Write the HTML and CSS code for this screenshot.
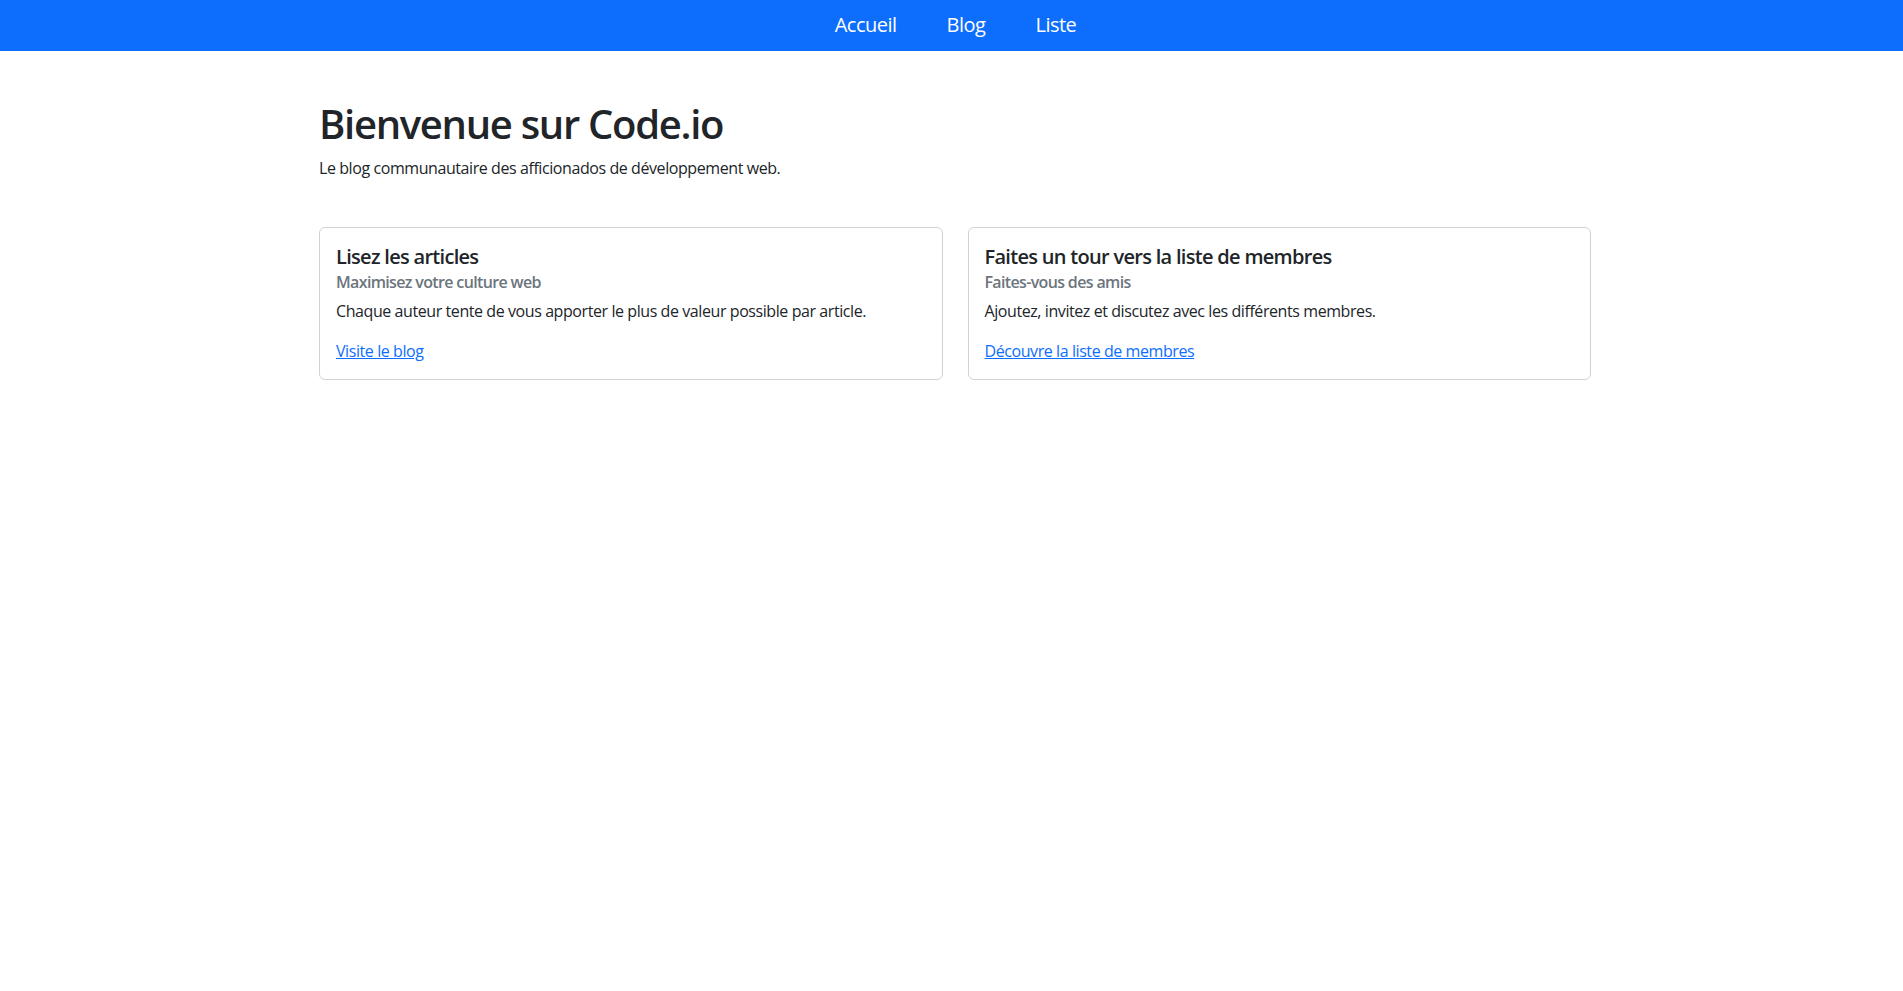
FILE: index.html
```html
<!DOCTYPE html>
<html lang="fr">
<head>
<meta charset="utf-8">
<title>Code.io</title>
<link rel="stylesheet" href="styles.css">
</head>
<body>
<nav class="navbar">
  <a class="nav-link" href="#">Accueil</a>
  <a class="nav-link" href="#">Blog</a>
  <a class="nav-link" href="#">Liste</a>
</nav>
<main class="container">
  <h1 class="title">Bienvenue sur Code.io</h1>
  <p class="lead">Le blog communautaire des afficionados de développement web.</p>
  <div class="cards">
    <div class="card">
      <h5 class="card-title">Lisez les articles</h5>
      <h6 class="card-subtitle">Maximisez votre culture web</h6>
      <p class="card-text">Chaque auteur tente de vous apporter le plus de valeur possible par article.</p>
      <a class="card-link" href="#">Visite le blog</a>
    </div>
    <div class="card">
      <h5 class="card-title">Faites un tour vers la liste de membres</h5>
      <h6 class="card-subtitle">Faites-vous des amis</h6>
      <p class="card-text">Ajoutez, invitez et discutez avec les différents membres.</p>
      <a class="card-link" href="#">Découvre la liste de membres</a>
    </div>
  </div>
</main>
</body>
</html>
```
FILE: styles.css
```css
* { box-sizing: border-box; }
html, body { margin: 0; padding: 0; }
body {
  font-family: "Open Sans", "Noto Sans", "Liberation Sans", sans-serif;
  font-size: 16px;
  line-height: 1.5;
  letter-spacing: -0.42px;
  color: #212529;
  background: #fff;
}
.navbar {
  height: 51px;
  background: #0d6efd;
  display: flex;
  align-items: center;
  justify-content: center;
  padding-left: 8px;
  padding-bottom: 2px;
  gap: 50px;
}
.nav-link {
  color: #fff;
  text-decoration: none;
  font-size: 20px;
  line-height: 30px;
  letter-spacing: -0.5px;
}
.container {
  width: 1279px;
  margin: 0 auto;
  padding: 49px 0 0 7px;
}
.title {
  margin: 0 0 8px;
  font-size: 40px;
  line-height: 48px;
  font-weight: 600;
  letter-spacing: -1.3px;
}
.lead {
  margin: 0;
  line-height: 24px;
}
.cards {
  margin-top: 47px;
  display: grid;
  grid-template-columns: 1fr 1fr;
  gap: 25px;
}
.card {
  border: 1px solid rgba(0, 0, 0, 0.175);
  border-radius: 6px;
  padding: 17px 16px 16px;
  display: flex;
  flex-direction: column;
  align-items: flex-start;
}
.card-title {
  margin: 0 0 8px;
  font-size: 20px;
  line-height: 24px;
  font-weight: 600;
  letter-spacing: -0.7px;
}
.card-subtitle {
  margin: -4px 0 7px;
  font-size: 16px;
  line-height: 19px;
  font-weight: 600;
  letter-spacing: -0.65px;
  color: #6c757d;
}
.card-text {
  margin: 0 0 16px;
  line-height: 24px;
}
.card-link {
  color: #0d6efd;
  text-decoration: underline;
  line-height: 24px;
}
```
